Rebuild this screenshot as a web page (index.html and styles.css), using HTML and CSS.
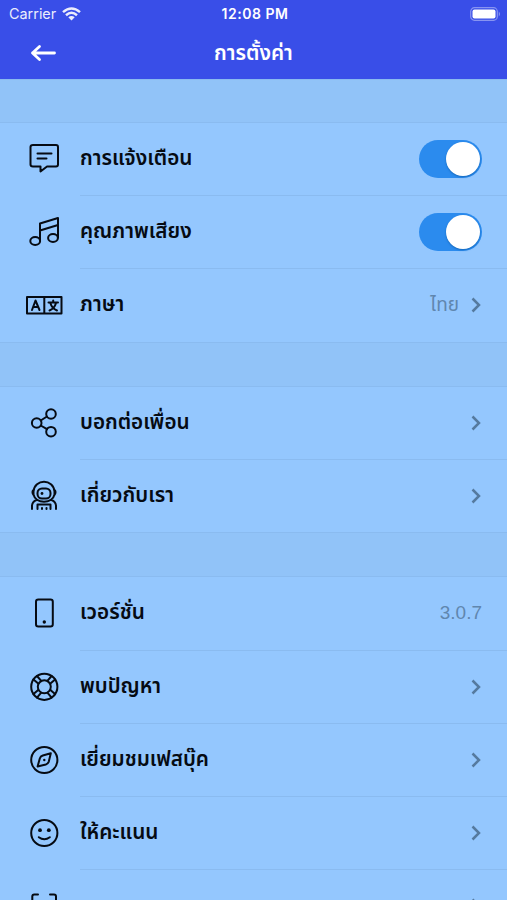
FILE: index.html
```html
<!DOCTYPE html>
<html lang="th">
<head>
<meta charset="utf-8">
<title>การตั้งค่า</title>
<link rel="stylesheet" href="styles.css">
</head>
<body>
<div class="screen">
  <header class="header">
    <div class="status">
      <div class="carrier"><span>Carrier</span>
        <svg class="wifi" width="19" height="14" viewBox="0 0 19 14" fill="none" stroke="#fff" stroke-width="2.5"><path d="M1 5.1Q9.5-2.2 18 5.1M4 8.2Q9.5 3.4 15 8.2"/><path d="M9.5 13.4L6.3 10.2Q9.5 7.8 12.7 10.2Z" fill="#fff" stroke="none"/></svg>
      </div>
      <div class="clock">12:08 PM</div>
      <svg class="battery" width="31" height="14" viewBox="0 0 31 14"><rect x=".7" y=".7" width="26.6" height="12.6" rx="3.8" fill="none" stroke="#fff" stroke-opacity=".4" stroke-width="1.2"/><rect x="2.5" y="2.5" width="23" height="9" rx="2" fill="#fff"/><path d="M28.8 4.5Q31 7 28.8 9.5Z" fill="#fff" fill-opacity=".45"/></svg>
    </div>
    <div class="nav">
      <svg class="back" width="28" height="18" viewBox="0 0 28 18" fill="none" stroke="#fff" stroke-width="2.8" stroke-linecap="round" stroke-linejoin="round"><path d="M25.500 9H3.500M10.500 2.500L3.500 9L10.500 15.500"/></svg>
      <h1 class="title">การตั้งค่า</h1>
    </div>
  </header>
  <section class="group">
    <div class="row">
      <svg class="icon" viewBox="0 0 40 40"><path d="M9 6H32Q34 6 34 8V25.500Q34 27.500 32 27.500H23L16.500 32.500V27.500H9Q6.500 27.500 6.500 25.500V8Q6.500 6 9 6ZM13.500 14.500H27.500M13.500 19.500H22.500"/></svg>
      <div class="cell"><span class="label">การแจ้งเตือน</span><span class="toggle"><span class="knob"></span></span></div>
    </div>
    <div class="row">
      <svg class="icon" viewBox="0 0 40 40"><path d="M16 28.500V11.500L34 6V25.500M16 18.500L34 13"/><ellipse cx="11.200" cy="29" rx="4.900" ry="3.900"/><ellipse cx="29" cy="26" rx="4.900" ry="3.900"/></svg>
      <div class="cell"><span class="label">คุณภาพเสียง</span><span class="toggle"><span class="knob"></span></span></div>
    </div>
    <div class="row">
      <svg class="icon" viewBox="0 0 40 40"><path d="M3 12H37.500V28.500H3ZM20.300 12V28.500M8 25L11.500 15.500L15.500 25M9.300 22H14.300M24.500 17.500H34M29.200 15.500V17.500M26.300 18Q28 23.500 33 25.500M32 18Q30.500 23.500 25.500 25.500"/></svg>
      <div class="cell"><span class="label">ภาษา</span><span class="value thai">ไทย</span><svg class="chevron" viewBox="0 0 12 16"><path d="M2.500 1.500L9 8L2.500 14.500"/></svg></div>
    </div>
  </section>
  <section class="group">
    <div class="row">
      <svg class="icon" viewBox="0 0 40 40"><circle cx="12.700" cy="20" r="4.800"/><circle cx="27" cy="11" r="4.800"/><circle cx="27" cy="28.700" r="4.800"/><path d="M16.700 17.500L23 13.500M16.700 22.500L23 26.200"/></svg>
      <div class="cell"><span class="label">บอกต่อเพื่อน</span><svg class="chevron" viewBox="0 0 12 16"><path d="M2.500 1.500L9 8L2.500 14.500"/></svg></div>
    </div>
    <div class="row">
      <svg class="icon" viewBox="0 0 40 40"><path d="M9.500 15.500C10.500 2.500 29.500 2.500 30.500 15.500V18.500C28.500 28 11.500 28 9.500 18.500ZM9.500 14Q7.500 16 9.500 19M30.500 14Q32.500 16 30.500 19M8 33V29.500Q8.500 25.500 12.500 24M32 33V29.500Q31.500 25.500 27.500 24"/><rect x="13.500" y="12.500" width="13" height="10" rx="4.500"/><path d="M13.500 33V28.500H26.500V33M18 32V33M22.500 32V33"/><circle class="dot" cx="18" cy="17.500" r="1.400"/></svg>
      <div class="cell"><span class="label">เกี่ยวกับเรา</span><svg class="chevron" viewBox="0 0 12 16"><path d="M2.500 1.500L9 8L2.500 14.500"/></svg></div>
    </div>
  </section>
  <section class="group">
    <div class="row">
      <svg class="icon" viewBox="0 0 40 40"><rect x="12" y="6.500" width="16.800" height="27" rx="2.300"/><circle class="dot" cx="20.300" cy="29" r="1.700"/></svg>
      <div class="cell"><span class="label">เวอร์ชั่น</span><span class="value">3.0.7</span></div>
    </div>
    <div class="row">
      <svg class="icon" viewBox="0 0 40 40"><circle cx="20.300" cy="19.800" r="13.100"/><circle cx="20.300" cy="19.800" r="6.500"/><path d="M9.500 12.500L14.200 16.500M13 9L17 13.700M27.600 9L23.600 13.700M31.100 12.500L26.400 16.500M9.500 27.100L14.200 23.100M13 30.600L17 25.900M27.600 30.600L23.600 25.900M31.100 27.100L26.400 23.100"/></svg>
      <div class="cell"><span class="label">พบปัญหา</span><svg class="chevron" viewBox="0 0 12 16"><path d="M2.500 1.500L9 8L2.500 14.500"/></svg></div>
    </div>
    <div class="row">
      <svg class="icon" viewBox="0 0 40 40"><circle cx="20.300" cy="20" r="13.100"/><path d="M26.800 13.300L18.800 15.500Q16.500 16.200 15.800 18.500L13.600 26.500L21.800 24.500Q24.100 23.800 24.800 21.500Z"/><circle class="dot" cx="20.300" cy="20" r="1.200"/></svg>
      <div class="cell"><span class="label">เยี่ยมชมเฟสบุ๊ค</span><svg class="chevron" viewBox="0 0 12 16"><path d="M2.500 1.500L9 8L2.500 14.500"/></svg></div>
    </div>
    <div class="row">
      <svg class="icon" viewBox="0 0 40 40"><circle cx="20.300" cy="20" r="13.100"/><path d="M14.800 24.200Q20.300 28.200 25.800 24.200"/><circle class="dot" cx="16" cy="17.200" r="1.900"/><circle class="dot" cx="24.800" cy="17.200" r="1.900"/></svg>
      <div class="cell"><span class="label">ให้คะแนน</span><svg class="chevron" viewBox="0 0 12 16"><path d="M2.500 1.500L9 8L2.500 14.500"/></svg></div>
    </div>
    <div class="row">
      <svg class="icon" viewBox="0 0 40 40"><path d="M8.300 15V10.500Q8.300 8.500 10.300 8.500H14M26 8.500H30Q32 8.500 32 10.500V15M8.300 26V30Q8.300 32 10.300 32H14M26 32H30Q32 32 32 30V26"/></svg>
      <div class="cell end"><svg class="chevron" viewBox="0 0 12 16"><path d="M2.500 1.500L9 8L2.500 14.500"/></svg></div>
    </div>
  </section>
</div>
</body>
</html>
```
FILE: styles.css
```css
* { box-sizing: border-box; }
body { margin: 0; background: #94c7fe; color: #060b13; font-family: Inter, "Noto Sans Thai", "Noto Sans", sans-serif; }
.screen { height: 900px; overflow: hidden; }
.header { height: 79px; background: #394ee8; color: #fff; }
.status { height: 27px; padding: 0 6px 0 9px; display: grid; grid-template-columns: 1fr auto 1fr; align-items: center; }
.carrier { display: flex; align-items: center; gap: 6px; font-size: 14.4px; opacity: .9; }
.clock { font-size: 14px; font-weight: 600; letter-spacing: .5px; }
.battery { justify-self: end; }
.nav { height: 51px; display: grid; grid-template-columns: 80px 1fr 80px; align-items: center; }
.back { margin-left: 28.5px; }
.title { margin: 0; text-align: center; font-size: 20.7px; line-height: 30px; font-weight: 600; }
.group { padding-top: 43.2px; background: #91c3f8; border-top: 1px solid #8abbf0; }
.header + .group { padding-top: 42px; }
.row { height: 73.2px; display: flex; background: #94c7fe; }
.row:first-child { border-top: 1px solid #8abbf0; }
.icon { width: 40px; height: 40px; flex: none; margin: 17px 16.5px 0 23.5px; fill: none; stroke: #060b13; stroke-width: 2; stroke-linecap: round; stroke-linejoin: round; }
.icon .dot { fill: #060b13; stroke: none; }
.row:first-child .icon { margin-top: 16px; }
.cell { flex: 1; display: flex; align-items: center; padding-right: 25px; border-top: 1px solid #8abbf0; }
.row:first-child .cell { border-top: 0; }
.cell.end { justify-content: flex-end; }
.label { margin-right: auto; padding-bottom: 2px; font-size: 20.7px; line-height: 30px; font-weight: 600; white-space: nowrap; }
.value { font-family: "Liberation Sans", sans-serif; font-size: 19px; color: #6086ae; }
.value.thai { font-family: Inter, "Noto Sans Thai", "Noto Sans", sans-serif; }
.toggle { width: 63px; height: 38px; padding: 2px; border-radius: 19px; background: #2b8bee; display: flex; justify-content: flex-end; }
.knob { width: 34px; height: 34px; border-radius: 50%; background: #fff; box-shadow: 0 1px 2px #1468bc; }
.chevron { width: 12px; height: 16px; margin-left: 11px; fill: none; stroke: #557a9f; stroke-width: 2.5; }
```
